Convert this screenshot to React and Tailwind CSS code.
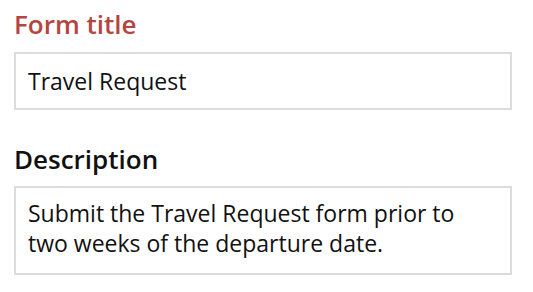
export default function App() {
  return (
    <div className="w-[533px] h-[292px] bg-white px-[14px] pt-[7px] font-['Open_Sans',sans-serif] text-[#111]">
      <div className="w-[498px]">
        <label className="block text-[26px] leading-[34px] font-semibold text-[#b5463f]">Form title</label>
        <div className="mt-[11px] h-[58px] border-2 border-[#dcdcdc] px-[12px] flex items-center text-[23px]">
          Travel Request
        </div>

        <label className="block mt-[32px] text-[26px] leading-[34px] font-semibold">Description</label>
        <div className="mt-[10px] h-[89px] border-2 border-[#dcdcdc] px-[12px] pt-[10px] text-[23px] leading-[30px]">
          Submit the Travel Request form prior to
          <br />
          two weeks of the departure date.
        </div>
      </div>
    </div>
  )
}
